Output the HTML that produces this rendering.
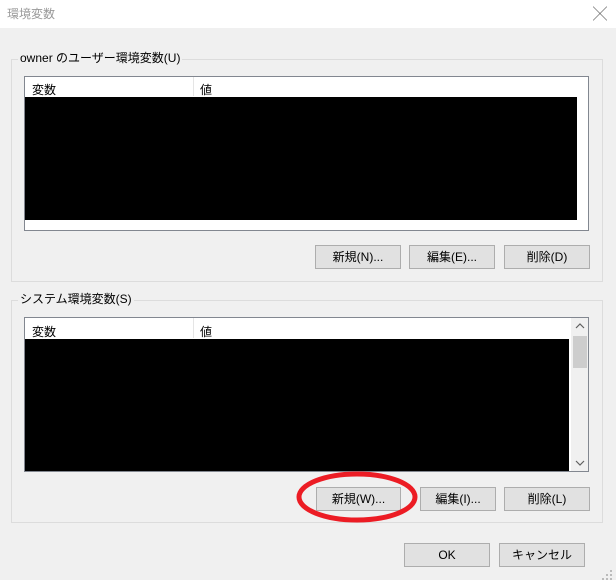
<!DOCTYPE html>
<html><head><meta charset="utf-8"><style>
*{margin:0;padding:0;box-sizing:border-box}
body{width:616px;height:580px;background:#f0f0f0;position:relative;overflow:hidden;font-family:"Liberation Sans","Noto Sans CJK JP",sans-serif;font-size:12px;color:#000}
.a{position:absolute}
.title{left:0;top:0;width:616px;height:28px;background:#fff}
.grp{border:1px solid #dcdcdc}
.leg{background:#f0f0f0;padding:0 2px;line-height:14px}
.list{background:#fff;border:1px solid #828790}
.btn{background:#e1e1e1;border:1px solid #adadad;text-align:center;line-height:22px}
.blk{background:#000}
</style></head><body>
<div class="a title"></div>
<div class="a" style="left:7px;top:5px;color:#999;font-size:12px">環境変数</div>
<div class="a" style="left:593px;top:4px;font-size:14px;color:#444">╳</div>

<div class="a grp" style="left:11px;top:59px;width:592px;height:223px"></div>
<div class="a leg" style="left:18px;top:51px">owner のユーザー環境変数(U)</div>
<div class="a list" style="left:24px;top:76px;width:565px;height:155px"></div>
<div class="a" style="left:193px;top:77px;width:1px;height:19px;background:#e5e5e5"></div>
<div class="a" style="left:32px;top:81px">変数</div>
<div class="a" style="left:200px;top:81px">値</div>
<div class="a blk" style="left:25px;top:97px;width:552px;height:123px"></div>
<div class="a btn" style="left:315px;top:245px;width:86px;height:24px">新規(N)...</div>
<div class="a btn" style="left:409px;top:245px;width:86px;height:24px">編集(E)...</div>
<div class="a btn" style="left:504px;top:245px;width:86px;height:24px">削除(D)</div>

<div class="a grp" style="left:11px;top:300px;width:592px;height:223px"></div>
<div class="a leg" style="left:18px;top:292px">システム環境変数(S)</div>
<div class="a list" style="left:24px;top:317px;width:565px;height:155px"></div>
<div class="a" style="left:193px;top:318px;width:1px;height:20px;background:#e5e5e5"></div>
<div class="a" style="left:32px;top:323px">変数</div>
<div class="a" style="left:200px;top:323px">値</div>
<div class="a blk" style="left:25px;top:339px;width:544px;height:132px"></div>
<div class="a" style="left:571px;top:318px;width:17px;height:153px;background:#f0f0f0"></div>
<div class="a" style="left:573px;top:336px;width:14px;height:32px;background:#cdcdcd"></div>
<svg class="a" style="left:575px;top:322px" width="10" height="8"><path d="M1 6L5 2L9 6" fill="none" stroke="#606060" stroke-width="1.2"/></svg>
<svg class="a" style="left:575px;top:459px" width="10" height="8"><path d="M1 2L5 6L9 2" fill="none" stroke="#606060" stroke-width="1.2"/></svg>
<div class="a btn" style="left:316px;top:487px;width:85px;height:24px">新規(W)...</div>
<div class="a btn" style="left:420px;top:487px;width:76px;height:24px">編集(I)...</div>
<div class="a btn" style="left:504px;top:487px;width:86px;height:24px">削除(L)</div>

<div class="a btn" style="left:404px;top:543px;width:86px;height:24px">OK</div>
<div class="a btn" style="left:499px;top:543px;width:86px;height:24px">キャンセル</div>

<svg class="a" style="left:0;top:0" width="616" height="580">
<ellipse cx="357" cy="497" rx="58" ry="23" fill="none" stroke="#ec1c24" stroke-width="5"/>
<g fill="#bbb"><rect x="610" y="570" width="2" height="2"/><rect x="606" y="574" width="2" height="2"/><rect x="610" y="574" width="2" height="2"/><rect x="602" y="578" width="2" height="2"/><rect x="606" y="578" width="2" height="2"/><rect x="610" y="578" width="2" height="2"/></g>
</svg>
</body></html>
